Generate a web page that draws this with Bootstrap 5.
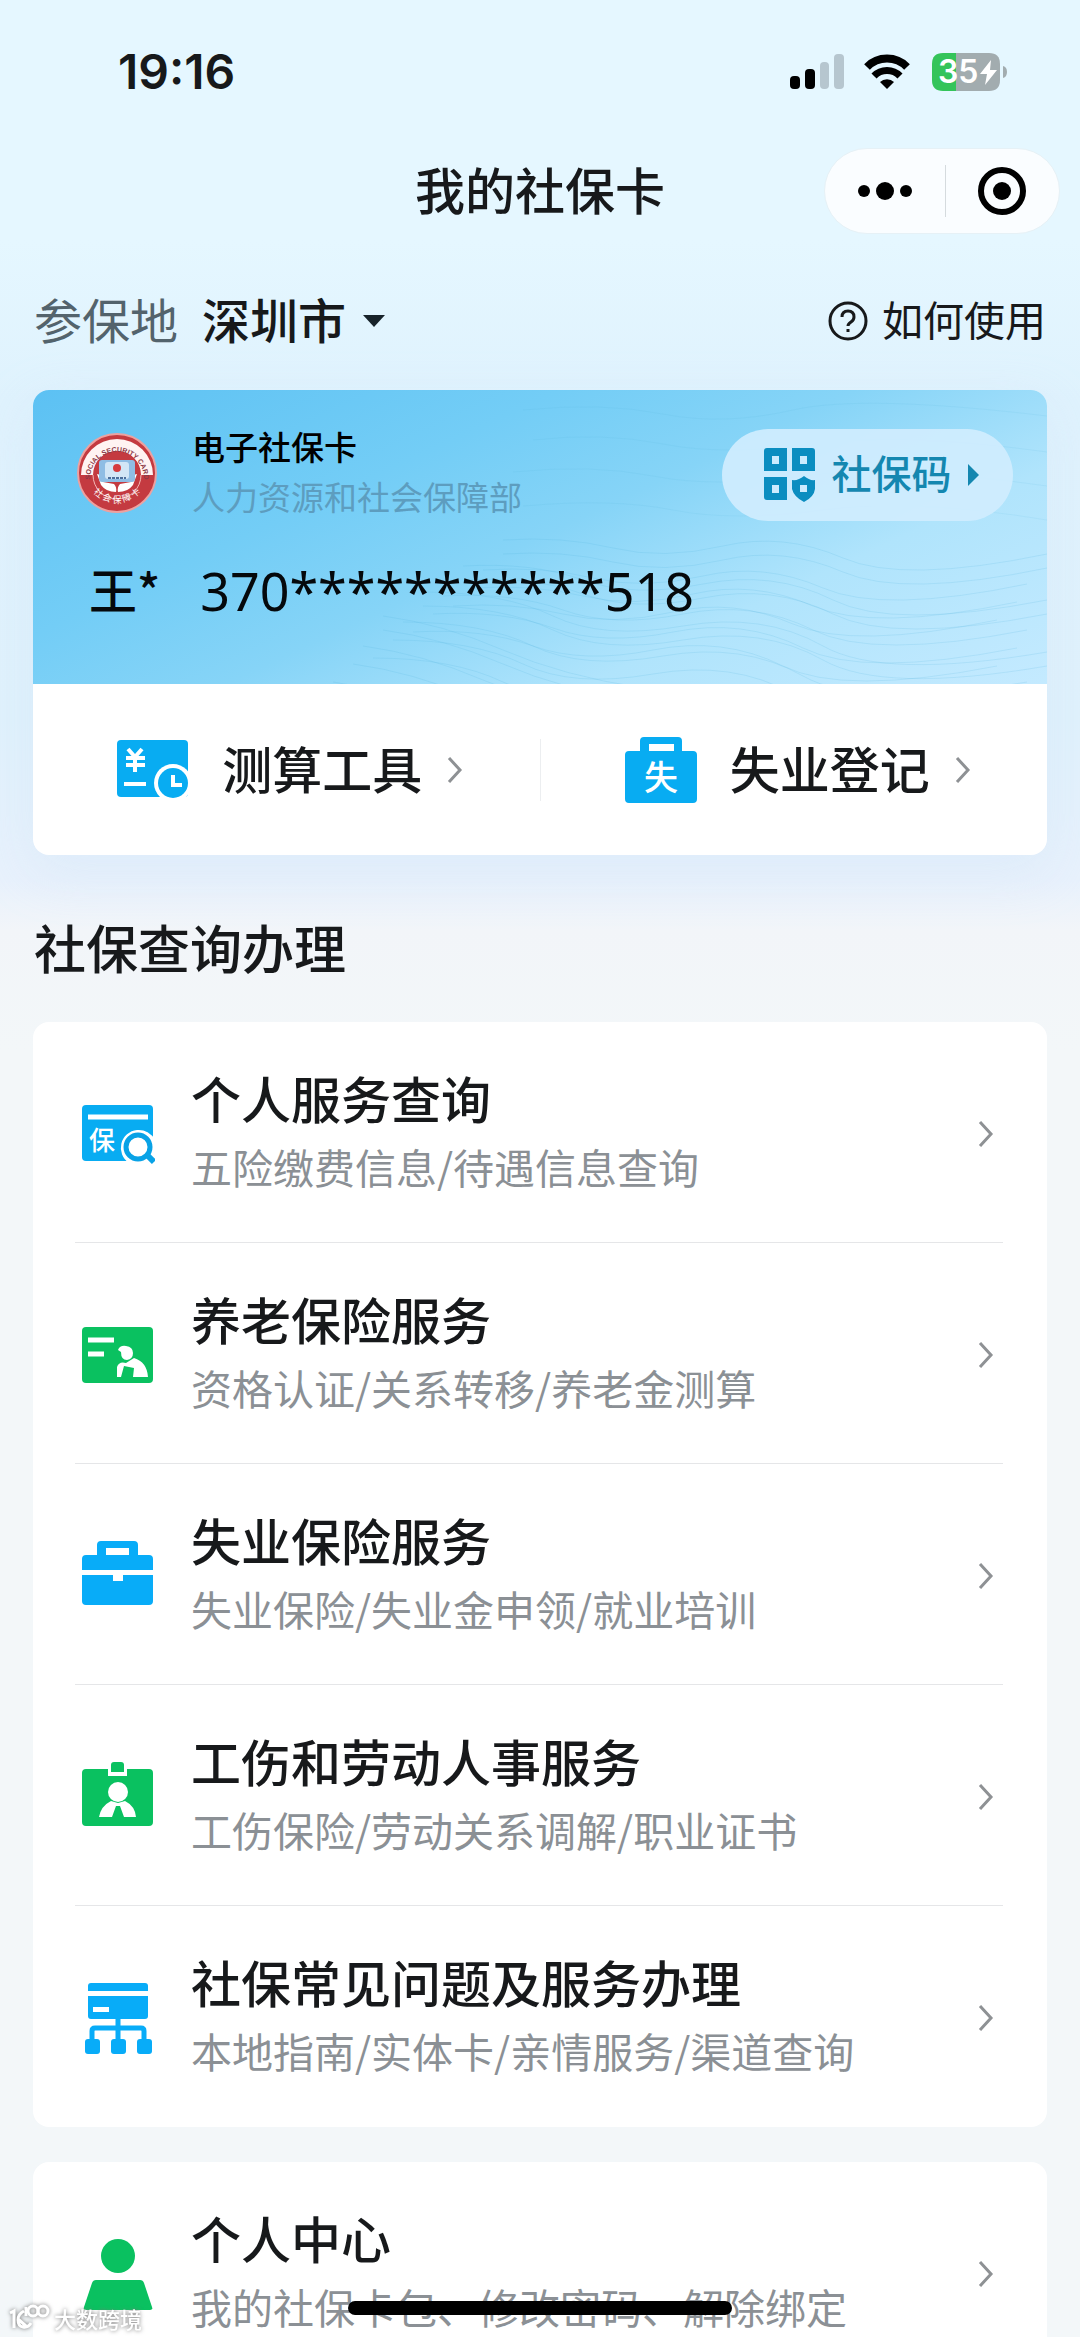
<!DOCTYPE html>
<html lang="zh-CN">
<head>
<meta charset="utf-8">
<meta name="viewport" content="width=device-width, initial-scale=1">
<title>我的社保卡</title>
<link rel="stylesheet" href="https://cdn.jsdelivr.net/npm/bootstrap@5.3.0/dist/css/bootstrap.min.css">
<style>
  body { font-family: "Noto Sans CJK SC", "Noto Sans", sans-serif; color: #17191b; background: #f3f7f9; }
  a, a:hover { color: inherit; text-decoration: none; }
  .app-shell { height: 100vh; }
  .app-scroll { background: linear-gradient(#e5f7ff 0, #e5f7ff 240px, #dff2fd 400px, #dff1fc 720px, #e8f1fc 880px, #f2f5f9 930px, #f3f7f9 1050px); }
  .status-bar { height: 124px; padding: 20px 72px 0 118px; }
  .clock-text { font: 600 48px/60px Inter, sans-serif; }
  .title-bar { height: 134px; padding: 0 20px 0 20px; }
  .title-side { flex: 1 1 0; }
  .page-title { font-size: 50px; line-height: 70px; font-weight: 500; }
  .lift { padding-bottom: 6px; }
  .capsule { width: 236px; height: 86px; border-radius: 43px; background: #fafdff; border: 1px solid #e6f1f6; }
  .capsule button, .plain-btn { border: 0; background: none; padding: 0; }
  .capsule .cap-divider { width: 1px; height: 52px; background: #d5dbde; }
  .place-bar { height: 132px; padding: 0 34px 6px 34px; }
  .place-text { font-size: 48px; line-height: 70px; }
  .text-l { font-size: 50px; line-height: 70px; }
  .text-m { font-size: 41px; line-height: 68px; }
  .text-s { font-size: 33px; line-height: 50px; }
  .fw-mid { font-weight: 500; }
  .place-label { color: #53636c; }
  .page-pad { padding: 0 33px; }
  .panel { background: #fff; border-radius: 16px; overflow: hidden; }
  .main-panel { box-shadow: 0 16px 50px #cfe4f866; }
  .id-card { height: 294px; padding: 31px 34px 0 44px; background: linear-gradient(155deg, #5cc1f3 0%, #73cdf6 32%, #86d4f7 50%, #b0e4fc 72%, #c4eaff 100%); }
  .waves { inset: 0; width: 100%; height: 100%; }
  .seal { margin-top: 11px; }
  .issuer { margin-left: 35px; }
  .dept { color: #5d9dbf; }
  .code-btn { width: 291px; height: 92px; margin-top: 8px; padding-left: 8px; border-radius: 46px; background: #d0edfeeb; color: #1487b0; }
  .code-label { font-size: 40px; line-height: 60px; }
  .holder { font-size: 48px; line-height: 70px; margin-top: 32px; padding-left: 12px; color: #05090c; }
  .holder-no { font-family: "Noto Sans", sans-serif; font-size: 52px; }
  .tools { height: 171px; }
  .tools .tool-divider { width: 1px; height: 62px; background: #eceef0; }
  .heading { font-size: 52px; line-height: 74px; padding: 55px 0 38px 1px; margin: 0; font-weight: 500; }
  .svc-list { padding: 0 44px 0 42px; }
  .svc { padding: 40px 0 36px 6px; border-bottom: 1px solid #e5e6e8; }
  .svc:last-child { border-color: transparent; }
  .svc-text { margin-left: 36px; }
  .svc-sub { color: #8b9095; }
  .svc .chev { margin-right: 8px; }
  .gap-panel { margin-top: 35px; }
  .home-bar { left: 50%; bottom: 22px; width: 384px; height: 14px; margin-left: -192px; border-radius: 7px; background: #000; }
  .brand-mark { left: 8px; bottom: 4px; color: #fff; font-size: 22px; line-height: 30px; filter: drop-shadow(0 0 2px #777); }
</style>
</head>
<body>
<svg width="0" height="0" class="position-absolute">
  <defs>
    <symbol id="chev" viewBox="0 0 18 30"><path d="M3 3l11 12L3 27" fill="none" stroke="#8e9194" stroke-width="3"/></symbol>
  </defs>
</svg>
<div class="app-shell position-relative overflow-hidden">
  <div class="app-scroll">
    <header>
      <div class="status-bar d-flex align-items-center justify-content-between">
        <span class="clock-text">19:16</span>
        <div class="d-flex align-items-center">
          <svg width="54" height="36" viewBox="0 0 54 36" class="me-3"><rect x="0" y="22" width="10" height="13" rx="4"/><rect x="15" y="15" width="10" height="20" rx="4"/><rect x="30" y="8" width="9" height="27" rx="4" fill="#b6c6cf"/><rect x="44" y="0" width="10" height="35" rx="4" fill="#b6c6cf"/></svg>
          <svg width="54" height="36" viewBox="-4 0 54 36" class="me-3"><path d="M3 13a28 28 0 0 1 40 0" fill="none" stroke="#000" stroke-width="8"/><path d="M10 22a18 18 0 0 1 26 0" fill="none" stroke="#000" stroke-width="7"/><path d="M16 28a10 10 0 0 1 14 0l-7 7z"/></svg>
          <svg width="78" height="40" viewBox="0 0 78 40" role="img" aria-label="35%"><path d="M13 1H26V39H13Q2 39 2 28V12Q2 1 13 1z" fill="#34c45a"/><path d="M26 1H59Q70 1 70 12V28Q70 39 59 39H26z" fill="#a2acaf"/><path d="M73 14q4 1 4 6t-4 6z" fill="#a2acaf"/><text x="8" y="31" font-family="Inter" font-weight="600" font-size="32" fill="#fff">35</text><path d="M61 8L50 22h7l-2 11 12-15h-7z" fill="#fff"/></svg>
        </div>
      </div>
      <div class="title-bar d-flex align-items-center">
        <div class="title-side"></div>
        <h1 class="page-title lift m-0">我的社保卡</h1>
        <div class="title-side d-flex justify-content-end">
          <div class="capsule d-flex align-items-center">
            <button class="flex-fill" aria-label="更多"><svg width="56" height="30" viewBox="0 0 56 30"><circle cx="7" cy="15" r="6"/><circle cx="28" cy="15" r="9"/><circle cx="49" cy="15" r="6"/></svg></button>
            <span class="cap-divider"></span>
            <button class="flex-fill" aria-label="关闭"><svg width="50" height="50" viewBox="0 0 50 50"><circle cx="25" cy="25" r="21" fill="none" stroke="#000" stroke-width="6"/><circle cx="25" cy="25" r="9"/></svg></button>
          </div>
        </div>
      </div>
      <div class="place-bar d-flex align-items-center justify-content-between">
        <button class="plain-btn d-flex align-items-center place-text text-reset">
          <span class="place-label lift">参保地</span><span class="fw-mid lift ms-4">深圳市</span>
          <svg class="ms-3" width="24" height="14" viewBox="0 0 24 14"><path d="M1 1h22L12 13z" fill="#17232a"/></svg>
        </button>
        <a href="#" class="d-flex align-items-center text-m">
          <svg class="me-2" width="46" height="40" viewBox="0 0 46 40" fill="none" stroke="#17191b" stroke-width="3"><circle cx="20" cy="20" r="18"/><path d="M14 16q0-6 6-6t6 6q0 3-3 5t-3 4"/><path d="M20 28v3"/></svg><span class="lift">如何使用</span>
        </a>
      </div>
    </header>
    <main class="page-pad">
      <section class="panel main-panel">
        <div class="id-card position-relative">
          <svg class="waves position-absolute" viewBox="0 0 1014 294" preserveAspectRatio="none" fill="none" stroke="#4aaed8" stroke-opacity=".16" stroke-width="1">
            <g id="wv"><path d="M470 150q60-4 110 8t110-2 120 12 204-4"/><path d="M430 176q70-4 120 14t120 4 130 16 214 0"/><path d="M390 202q80 0 130 24t130 10 140 20 224 6"/><path d="M350 226q60 8 120 34t140 38 140 4"/></g>
            <use href="#wv" y="14"/><use href="#wv" y="30" x="-20"/><use href="#wv" y="48" x="-30"/><use href="#wv" y="66" x="-50"/>
            <g stroke-opacity=".1"><path d="M490 20q80-8 140 4t130-4 254 6M500 50q70-8 130 4t150 0 234 8M480 82q80-8 140 4t150 0 244 10M490 116q90-8 150 4t150 0 224 10"/></g>
          </svg>
          <div class="position-relative d-flex align-items-start">
            <svg width="80" height="82" viewBox="0 0 80 82" class="seal" role="img" aria-label="社会保障卡">
              <circle cx="40" cy="41" r="39" fill="#c43a40" stroke="#eda1a0" stroke-width="2"/>
              <path d="M4 43a36 36 0 0 1 72 0H64a24 24 0 0 0-48 0z" fill="#fff3f2"/>
              <circle cx="40" cy="42" r="23" fill="#c43a40"/>
              <path d="M16 43a24 24 0 0 0 48 0" fill="none" stroke="#f4b7b5" stroke-width="1"/>
              <path d="M20 42q4 0 6 8l11 2q3 3 2 8-10 0-15-7zM60 42q-4 0-6 8l-11 2q-3 3-2 8 10 0 15-7z" fill="#fff"/>
              <rect x="22" y="28" width="36" height="22" rx="3" fill="#8fbde4"/><rect x="28" y="30" width="24" height="17" rx="3" fill="#d2e6f6"/><circle cx="40" cy="36" r="4" fill="#d63a3d"/><path d="M31 46h18" stroke="#4c6e9b" stroke-width="2" stroke-dasharray="3 1"/>
              <path id="arcTop" d="M13 47a27 27 0 1 1 54 0" fill="none"/>
              <path id="arcBottom" d="M9 49a33 33 0 0 0 62 0" fill="none"/>
              <text font-family="Liberation Sans" font-weight="700" font-size="7" fill="#8c3a48"><textPath href="#arcTop" startOffset="50%" text-anchor="middle">SOCIAL SECURITY CARD</textPath></text>
              <text font-size="9" fill="#fff"><textPath href="#arcBottom" startOffset="50%" text-anchor="middle">社 会 保 障 卡</textPath></text>
            </svg>
            <div class="issuer flex-fill">
              <div class="text-s fw-mid text-black">电子社保卡</div>
              <div class="text-s dept">人力资源和社会保障部</div>
            </div>
            <button class="plain-btn code-btn d-flex align-items-center justify-content-center">
              <svg width="52" height="54" viewBox="0 0 52 54" fill="#0b8dc0" fill-rule="evenodd"><path d="M3 0H23V23H0V3q0-3 3-3zM8 8v8h7V8zM28 0H48q3 0 3 3V23H28zM36 8v8h7V8zM0 29H23V52H3q-3 0-3-3zM8 37v8h7v-8zM40 28q6 5 11 4v9q-1 8-11 13-10-5-12-13v-9q6 1 12-4zM36 37v7h7v-7z"/></svg>
              <span class="code-label fw-mid lift mx-3">社保码</span>
              <svg width="12" height="22" viewBox="0 0 12 22"><path d="M0 0l11 11L0 22z" fill="#1487b0"/></svg>
            </button>
          </div>
          <div class="holder position-relative d-flex align-items-center"><span class="fw-mid lift">王*</span><span class="holder-no ms-4 ps-3">370***********518</span></div>
        </div>
        <div class="tools d-flex align-items-center">
          <a href="#" class="flex-fill d-flex align-items-center justify-content-center ps-2">
            <svg width="74" height="64" viewBox="0 0 74 64"><rect x="1" y="2" width="71" height="57" rx="4" fill="#08acf2"/><g stroke="#fff" stroke-width="4" fill="none"><path d="M12 11l7 8 7-8M10 20h19M10 27h19M19 19v15"/><path d="M8 46h22"/></g><circle cx="57" cy="45" r="19" fill="#fff"/><circle cx="57" cy="45" r="15" fill="#08acf2"/><path d="M57 37v10h9" fill="none" stroke="#fff" stroke-width="4"/></svg>
            <span class="text-l fw-mid lift mx-4 ps-2">测算工具</span><svg width="18" height="30"><use href="#chev"/></svg>
          </a>
          <span class="tool-divider"></span>
          <a href="#" class="flex-fill d-flex align-items-center justify-content-center ps-2">
            <svg width="74" height="68" viewBox="0 0 74 68"><path d="M5 15H16V5q0-4 4-4H54q4 0 4 4V15H69q4 0 4 4V63q0 4-4 4H5q-4 0-4-4V19q0-4 4-4zM25 8v7H50V8z" fill="#08acf2" fill-rule="evenodd"/><text x="37" y="54" text-anchor="middle" font-size="34" font-weight="500" fill="#fff">失</text></svg>
            <span class="text-l fw-mid lift mx-4 ps-2">失业登记</span><svg width="18" height="30"><use href="#chev"/></svg>
          </a>
        </div>
      </section>

      <h2 class="heading">社保查询办理</h2>

      <nav class="panel svc-list" aria-label="社保查询办理">
        <a href="#" class="svc d-flex align-items-center">
          <svg width="74" height="74" viewBox="0 0 74 74"><rect x="1" y="8" width="71" height="56" rx="4" fill="#08acf2"/><path d="M7 20h60" stroke="#fff" stroke-width="5"/><text x="21" y="53" text-anchor="middle" font-size="26" font-weight="500" fill="#fff">保</text><path d="M56 33a18 18 0 0 1 18 10V66H48a18 18 0 0 1 8-33z" fill="#fff"/><circle cx="57" cy="50" r="12" fill="none" stroke="#08a2e6" stroke-width="5"/><path d="M65 57l8 8" stroke="#08a2e6" stroke-width="6"/></svg>
          <div class="svc-text lift flex-fill"><div class="text-l fw-mid">个人服务查询</div><div class="text-m svc-sub">五险缴费信息/待遇信息查询</div></div>
          <svg class="chev" width="18" height="30"><use href="#chev"/></svg>
        </a>
        <a href="#" class="svc d-flex align-items-center">
          <svg width="74" height="74" viewBox="0 0 74 74"><rect x="1" y="9" width="71" height="56" rx="4" fill="#0ac160"/><path d="M7 22h26M7 36h16" stroke="#fff" stroke-width="5"/><path d="M37 32q2-5 8-4 7 1 7 7 0 6-6 7-6 0-6-8zM53 40q13 4 14 19H52l1-9-10-2-3 11h-4V49q2-6 9-4z" fill="#fff"/></svg>
          <div class="svc-text lift flex-fill"><div class="text-l fw-mid">养老保险服务</div><div class="text-m svc-sub">资格认证/关系转移/养老金测算</div></div>
          <svg class="chev" width="18" height="30"><use href="#chev"/></svg>
        </a>
        <a href="#" class="svc d-flex align-items-center">
          <svg width="74" height="74" viewBox="0 0 74 74" fill="#08acf8"><path d="M5 16H16V6q0-4 4-4H53q4 0 4 4V16H68q4 0 4 4V31H1V20q0-4 4-4zM25 9v7H48V9z" fill-rule="evenodd"/><path d="M1 36H32V42H42V36H72V62q0 4-4 4H5q-4 0-4-4z"/></svg>
          <div class="svc-text lift flex-fill"><div class="text-l fw-mid">失业保险服务</div><div class="text-m svc-sub">失业保险/失业金申领/就业培训</div></div>
          <svg class="chev" width="18" height="30"><use href="#chev"/></svg>
        </a>
        <a href="#" class="svc d-flex align-items-center">
          <svg width="74" height="74" viewBox="0 0 74 74" fill="#0ac160"><path d="M5 9H27V16H46V9H68q4 0 4 4V62q0 4-4 4H5q-4 0-4-4V13q0-4 4-4z"/><path d="M30 12V5q0-3 3-3h7q3 0 3 3v7z"/><circle cx="37" cy="32" r="10" fill="#fff"/><path d="M30 41L37 43 44 41Q54 46 55 57H43L39 46H35L31 57H18Q20 46 30 41z" fill="#fff"/></svg>
          <div class="svc-text lift flex-fill"><div class="text-l fw-mid">工伤和劳动人事服务</div><div class="text-m svc-sub">工伤保险/劳动关系调解/职业证书</div></div>
          <svg class="chev" width="18" height="30"><use href="#chev"/></svg>
        </a>
        <a href="#" class="svc d-flex align-items-center">
          <svg width="74" height="74" viewBox="0 0 74 74" fill="#08acf8"><path d="M10 2H64q3 0 3 3V10H7V5q0-3 3-3z"/><path d="M7 15H67V35q0 3-3 3H10q-3 0-3-3zM12 26v5H28V26z" fill-rule="evenodd"/><path d="M37 37V59M11 59V50q0-3 3-3H60q3 0 3 3V59" fill="none" stroke="#08acf8" stroke-width="5"/><rect x="4" y="58" width="15" height="15" rx="3"/><rect x="30" y="58" width="15" height="15" rx="3"/><rect x="56" y="58" width="15" height="15" rx="3"/></svg>
          <div class="svc-text lift flex-fill"><div class="text-l fw-mid">社保常见问题及服务办理</div><div class="text-m svc-sub">本地指南/实体卡/亲情服务/渠道查询</div></div>
          <svg class="chev" width="18" height="30"><use href="#chev"/></svg>
        </a>
      </nav>

      <nav class="panel svc-list gap-panel" aria-label="个人中心">
        <a href="#" class="svc d-flex align-items-center">
          <svg width="74" height="74" viewBox="0 0 74 74" fill="#0ac160"><circle cx="37" cy="19" r="17"/><path d="M15 43H59q3 0 4 3L71 70q1 3-2 3H5q-3 0-2-3L11 46q1-3 4-3z"/></svg>
          <div class="svc-text lift flex-fill"><div class="text-l fw-mid">个人中心</div><div class="text-m svc-sub">我的社保卡包、修改密码、解除绑定</div></div>
          <svg class="chev" width="18" height="30"><use href="#chev"/></svg>
        </a>
      </nav>
    </main>
  </div>
  <div class="home-bar position-absolute"></div>
  <div class="brand-mark position-absolute d-flex align-items-center fw-mid">
    <svg width="42" height="28" viewBox="0 0 42 28" fill="none" stroke="#fff" stroke-width="3" class="me-1"><path d="M2 9l4-2v17M16 7q-6 3-6 9t5 7q5 1 8-4M10 15l8 7M18 3v9"/><circle cx="25" cy="7" r="5"/><circle cx="35" cy="7" r="5"/></svg>大数跨境
  </div>
</div>
<script src="https://cdn.jsdelivr.net/npm/bootstrap@5.3.0/dist/js/bootstrap.bundle.min.js"></script>
</body>
</html>
